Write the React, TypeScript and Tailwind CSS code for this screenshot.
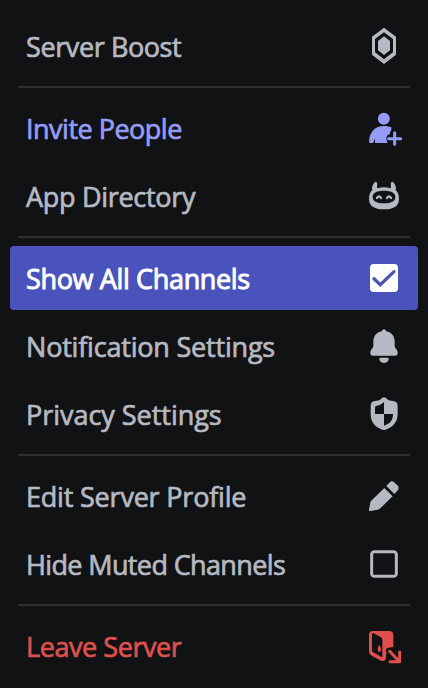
import type { ReactNode } from "react";

type Item = {
  label: string;
  icon: ReactNode;
  tone?: "brand" | "danger" | "active";
  tracking: string;
};

const tones = {
  normal: "text-[#b5b9c2]",
  brand: "text-[#949cf7]",
  danger: "text-[#df504c]",
  active: "bg-[#4a53bc] text-white",
};

function Icon({ viewBox, children }: { viewBox: string; children: ReactNode }) {
  return (
    <svg className="h-[50px] w-[50px] shrink-0" viewBox={viewBox} fill="currentColor" aria-hidden="true">
      {children}
    </svg>
  );
}

const BoostIcon = () => (
  <Icon viewBox="0 3 150 150">
    <path fillRule="evenodd" d="M72 23 108 50V104L72 132 36 104V50ZM72 37 45 57V97L72 118 99 97V57Z" />
    <path d="M72 49 90 63V91L72 105 54 91V63Z" />
  </Icon>
);

const InviteIcon = () => (
  <Icon viewBox="0 -3 150 150">
    <circle cx="71.500" cy="44.500" r="18" />
    <path d="M72 66C81 66 88 68 94 70V77C94 80 92 82 90 83V91C84 91 79 97 79 103C79 109 81 114 83 117H45V103Q43 111 39 117H30Q27 117 27 114C27 88 42 66 72 66Z" />
    <path d="M104 86V121M86 104H122" fill="none" stroke="currentColor" strokeWidth="9" strokeLinecap="round" />
  </Icon>
);

const AppIcon = () => (
  <Icon viewBox="0 -3 150 150">
    <path fillRule="evenodd" d="M43 32Q47 27 51 32C53 37 50 42 52 49Q72 43 92 49C94 42 91 37 93 32Q97 27 101 32C107 39 109 46 107 54C114 61 117 69 117 81C117 101 102 112 72 112S27 101 27 81C27 69 30 61 37 54C35 46 37 39 43 32ZM72 56C51 56 38 62 38 75S51 94 72 94 106 88 106 75 93 56 72 56Z" />
    <path d="M51 78Q57 68 63 78M81 78Q87 68 93 78" fill="none" stroke="currentColor" strokeWidth="7" strokeLinecap="round" />
  </Icon>
);

const CheckedIcon = () => (
  <Icon viewBox="30 39 150 150">
    <rect x="60" y="72" width="84" height="84" rx="11" />
    <path d="m72 116 19 18 41-39" fill="none" stroke="#4a53bc" strokeWidth="10" strokeLinecap="round" strokeLinejoin="miter" />
  </Icon>
);

const BellIcon = () => (
  <Icon viewBox="0 -3 150 150">
    <path d="M72 22Q77 22 79 28C95 31 104 43 104 60V72C104 79 113 82 113 92Q113 101 105 101H39Q31 101 31 92C31 82 40 79 40 72V60C40 43 49 31 65 28Q67 22 72 22Z" />
    <path d="M61 107H83Q86 107 86 110A14 13 0 0 1 58 110Q58 107 61 107Z" />
  </Icon>
);

const ShieldIcon = () => (
  <Icon viewBox="0 -3 150 150">
    <path fillRule="evenodd" d="M66 24Q72 20 78 24L86 31 103 34Q113 37 113 47V72C113 96 99 111 77 119Q72 121 67 119C45 111 32 96 32 72V47Q32 37 41 34L58 31ZM72 36 64 42Q60 45 50 47 45 48 45 53V72H72ZM72 72V107C91 101 99 90 99 72Z" />
  </Icon>
);

const PencilIcon = () => (
  <Icon viewBox="0 -3 150 150">
    <path d="m73 48 25 25-37 36Q58 112 54 113L31 117Q26 118 27 113L31 91Q32 87 36 84Z" />
    <path d="m79 42 9-10Q96 24 104 32L112 40Q120 48 112 56L103 66Z" />
  </Icon>
);

const EmptyBoxIcon = () => (
  <Icon viewBox="0 -3 150 150">
    <rect x="35" y="35" width="74" height="74" rx="8" fill="none" stroke="currentColor" strokeWidth="9" />
  </Icon>
);

const LeaveIcon = () => (
  <Icon viewBox="0 3 150 150">
    <path fillRule="evenodd" d="M39 33H87Q100 33 100 46V82Q95 79 91 83C81 79 74 90 80 98L78 104V113Q76 126 63 122L35 107Q27 102 27 92V45Q27 33 39 33ZM36 43V92Q36 95 39 97L67 112V60Q67 55 63 52L41 40Q36 38 36 43Z" />
    <path d="M58 76Q63 80 63 88T58 97Q53 94 53 86T58 76Z" />
    <path d="m89 94 28 30M119 96V125H90" fill="none" stroke="currentColor" strokeWidth="9" strokeLinecap="round" strokeLinejoin="round" />
  </Icon>
);

const groups: Item[][] = [
  [{ label: "Server Boost", icon: <BoostIcon />, tracking: "tracking-[-0.4px]" }],
  [
    { label: "Invite People", icon: <InviteIcon />, tone: "brand", tracking: "tracking-[-0.5px]" },
    { label: "App Directory", icon: <AppIcon />, tracking: "tracking-[-0.3px]" },
  ],
  [
    { label: "Show All Channels", icon: <CheckedIcon />, tone: "active", tracking: "tracking-[-0.35px]" },
    { label: "Notification Settings", icon: <BellIcon />, tracking: "tracking-[-0.2px]" },
    { label: "Privacy Settings", icon: <ShieldIcon />, tracking: "tracking-[-0.03px]" },
  ],
  [
    { label: "Edit Server Profile", icon: <PencilIcon />, tracking: "tracking-[-0.2px]" },
    { label: "Hide Muted Channels", icon: <EmptyBoxIcon />, tracking: "tracking-[-0.63px]" },
  ],
  [{ label: "Leave Server", icon: <LeaveIcon />, tone: "danger", tracking: "tracking-[-0.43px]" }],
];

function MenuItem({ label, icon, tone, tracking }: Item) {
  const weight =
    tone === "active"
      ? "[-webkit-text-stroke:0.9px_currentColor]"
      : "[-webkit-text-stroke:0.7px_currentColor]";
  return (
    <button
      type="button"
      className={`flex h-16 w-full items-center justify-between rounded-[4px] pr-2 pl-4 ${tones[tone ?? "normal"]}`}
    >
      <span className={`pt-px whitespace-nowrap ${weight} ${tracking}`}>{label}</span>
      {icon}
    </button>
  );
}

export default function App() {
  return (
    <main className="h-[688px] w-[428px] overflow-hidden bg-[#111214] px-2.5 pt-3.5 font-['Open_Sans',sans-serif] text-[27px] leading-9 font-medium">
      {groups.map((items, i) => (
        <section key={items[0].label}>
          {i > 0 && <hr className="mx-2 my-2 border-t-2 border-[#2e2f34]" />}
          <div className="flex flex-col gap-1">
            {items.map((item) => (
              <MenuItem key={item.label} {...item} />
            ))}
          </div>
        </section>
      ))}
    </main>
  );
}
